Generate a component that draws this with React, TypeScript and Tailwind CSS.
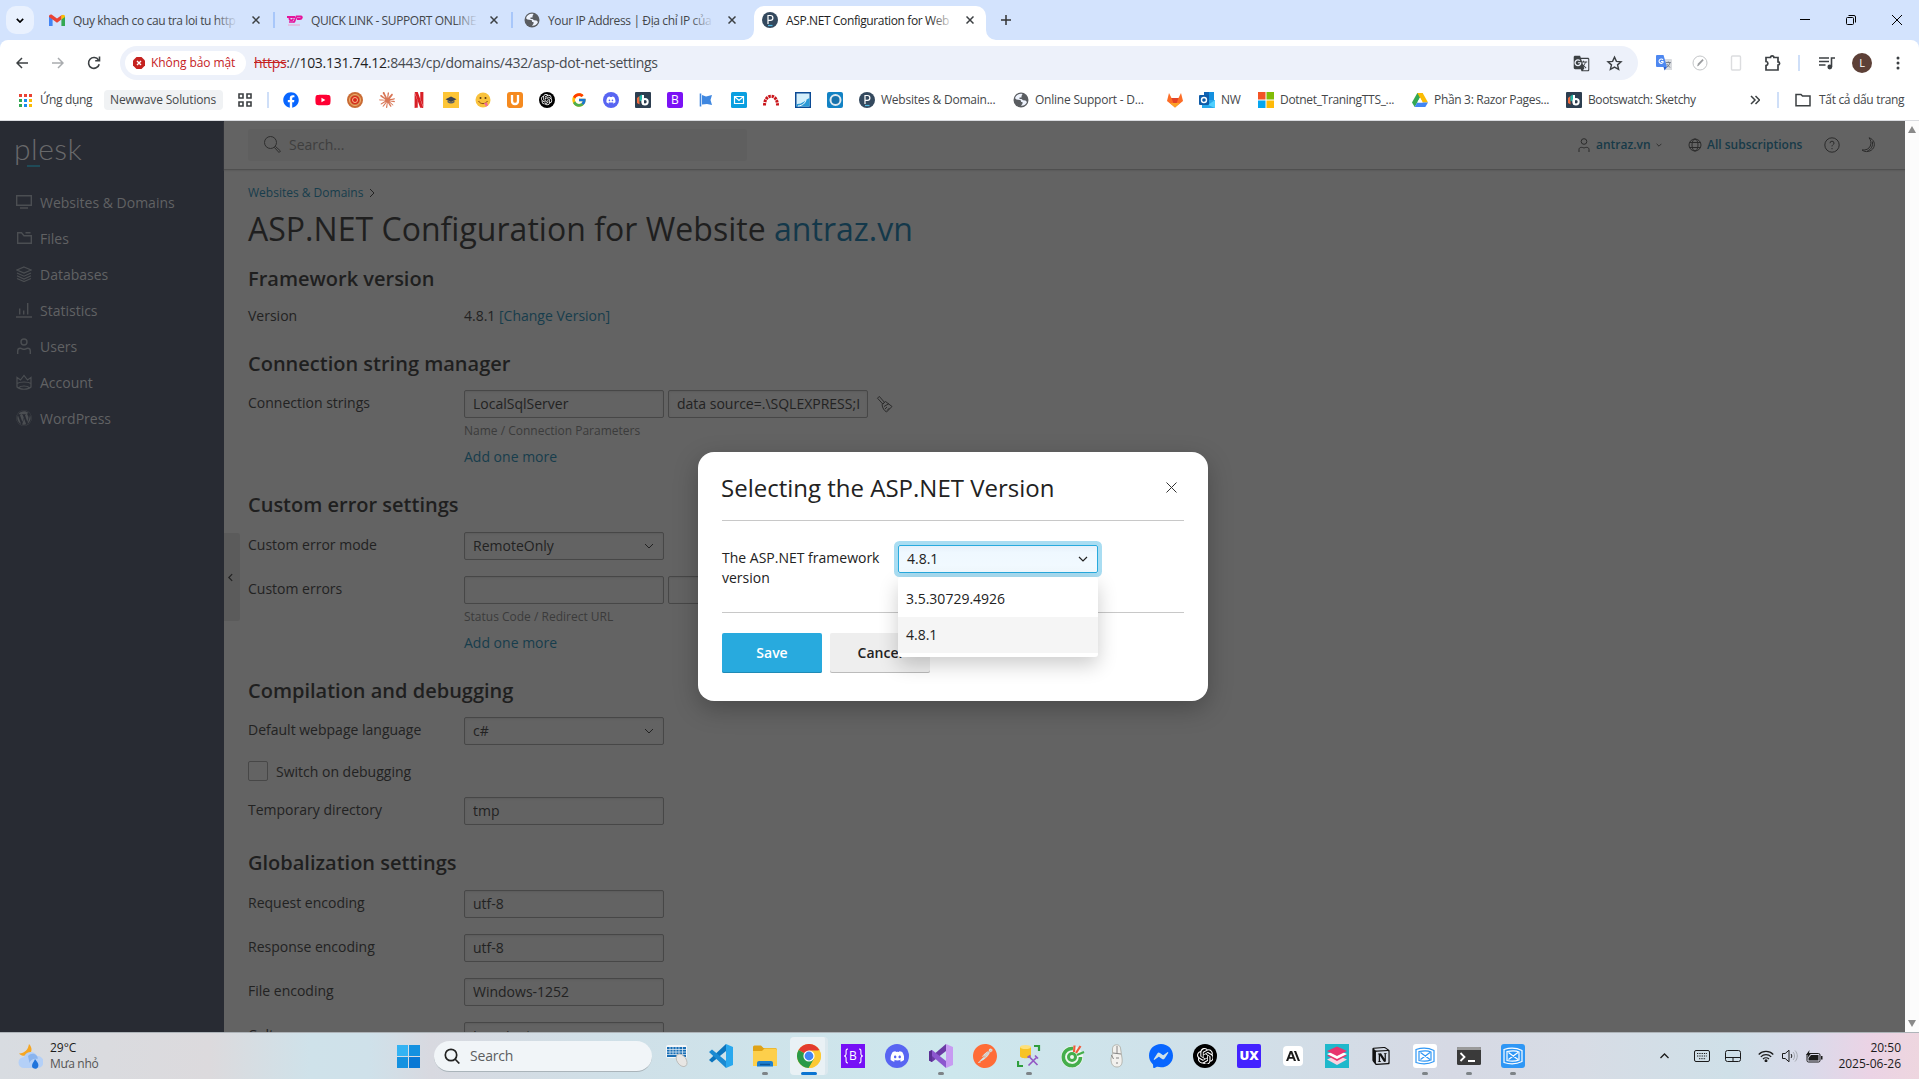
import React from "react";
import { FaFacebook, FaYoutube, FaDiscord, FaWordpress } from "react-icons/fa";
import { FcGoogle } from "react-icons/fc";
import { SiNetflix, SiOpenai, SiClaude, SiAnthropic, SiNotion, SiMessenger, SiPostman } from "react-icons/si";
import { MdGTranslate } from "react-icons/md";

type P = { className?: string };

const Chevron = ({ className = "" }: P) => (
  <svg viewBox="0 0 10 6" className={className} fill="none" stroke="currentColor"><path d="M1 1l4 4 4-4" /></svg>
);

const TabClose = ({ className = "" }: P) => (
  <svg viewBox="0 0 8 8" className={`size-2 shrink-0 ${className}`} fill="none" stroke="#3c4043" strokeWidth="1.5"><path d="M.5.5l7 7M7.5.5l-7 7" /></svg>
);

const Globe = () => (
  <svg viewBox="0 0 16 16" className="size-4 shrink-0">
    <circle cx="8" cy="8" r="7.5" fill="#5a5d61" />
    <path d="M9.500 2C6 1.200 3 3 2 6.200l1.500 1.300 3.500.5c1 .3 1.300 1 1 2h1.500v1.800l-1.500 2c3 .2 5-1.300 6-3.800l-1.500-1.500-2.500-.3-1.500-1.200H6.500V5.500h2V4z" fill="#eef3fd" />
  </svg>
);

const PleskIcon = () => (
  <svg viewBox="0 0 16 16" className="size-4 shrink-0">
    <circle cx="8" cy="8" r="8" fill="#34495e" />
    <path d="M6 12V3.500h2.500a2.300 2.300 0 010 4.800H6" fill="none" stroke="#fff" strokeWidth="1.200" />
    <path d="M6 13.500h4.500" stroke="#53bce6" strokeWidth="1.200" />
  </svg>
);

const Bootswatch = () => (
  <svg viewBox="0 0 16 16" className="size-4 shrink-0">
    <rect width="16" height="16" rx="1" fill="#2c3e50" />
    <path d="M2 6l2.500-2v8.500L2 11z" fill="#f26b3c" /><path d="M4.500 4L7 2.500v6l-2.500 1z" fill="#21b6a8" />
    <path d="M8 3v9.500" stroke="#fff" strokeWidth="2" /><circle cx="10" cy="9.700" r="2.700" fill="none" stroke="#fff" strokeWidth="2" />
  </svg>
);

const Gmail = () => (
  <svg viewBox="0 0 16 12" className="h-3 w-4 shrink-0">
    <path d="M0 1.500V12h3.600V5z" fill="#4285f4" /><path d="M16 1.500V12h-3.600V5z" fill="#34a853" />
    <path d="M0 2.500C0 .8 1.800 0 3.200 1L8 4.600 12.800 1 12.400 5.400 8 8.700 3.600 5.400 0 3z" fill="#ea4335" />
    <path d="M12.400 1.300C14 0 16 .8 16 2.500v.5l-3.600 2.600z" fill="#fbbc04" />
  </svg>
);

const Tab = ({ icon, children, w, fade = "from-[#d3e3fd]" }: { icon: React.ReactNode; children: string; w: string; fade?: string }) => (
  <>
    {icon}
    <div className={`relative ml-2 whitespace-nowrap pt-px text-[12px] leading-[18px] ${w}`}>
      {children}
      <div className={`absolute right-0 top-0 h-5 w-6 bg-gradient-to-l to-transparent ${fade}`} />
    </div>
  </>
);

function Tabs() {
  return (
    <div className="flex h-10 items-center bg-[#d3e3fd] text-[#44474a] tracking-[-0.38px]">
      <div className="ml-1.5 flex size-7 items-center justify-center rounded-[10px] bg-[#e9f1fe] text-black">
        <Chevron className="h-[5px] w-2 [stroke-width:2]" />
      </div>
      <div className="ml-[15px] flex w-[226px] shrink-0 items-center">
        <Tab icon={<Gmail />} w="w-[166px]">Quy khach co cau tra loi tu http</Tab>
        <TabClose className="ml-[14px]" />
        <div className="ml-[13px] h-4 w-[2px] bg-[#a8c7fa]" />
      </div>
      <div className="ml-[12px] flex w-[226px] shrink-0 items-center">
        <Tab w="w-[168px]" icon={
          <svg viewBox="0 0 16 12" className="h-3 w-4 shrink-0" fill="none" stroke="#e5149b" strokeWidth="1.500"><path d="M0 3h8M2.500 3v1.500C2.500 7 6 7 6 4.500M7 8.500l2.500-6h4.500c1.500 0 1 2.500-1 2.500h-3" strokeWidth="1.800" /><path d="M2 8h5" /><path d="M1 11h12" stroke="#efa0cc" strokeWidth="1" /></svg>
        }>QUICK LINK - SUPPORT ONLINE</Tab>
        <TabClose className="ml-[12px]" />
        <div className="ml-[13px] h-4 w-[2px] bg-[#a8c7fa]" />
      </div>
      <div className="ml-[11px] flex w-[216px] shrink-0 items-center">
        <Tab icon={<Globe />} w="w-[166px]">Your IP Address | Địa chỉ IP của</Tab>
        <TabClose className="ml-[14px]" />
      </div>
      <div className="flex h-[34px] items-end self-end">
        <svg viewBox="0 0 10 10" className="ml-[4px] size-2.5" fill="#fff"><path d="M10 0v10H0a10 10 0 0010-10z" /></svg>
        <div className="flex h-[34px] w-[232px] items-center rounded-t-[10px] bg-white pb-[6px] pl-2 text-[#1f1f1f]">
          <Tab icon={<PleskIcon />} w="w-[168px]" fade="from-white">ASP.NET Configuration for Web</Tab>
          <TabClose className="ml-[12px]" />
        </div>
        <svg viewBox="0 0 10 10" className="size-2.5" fill="#fff"><path d="M0 0v10h10A10 10 0 010 0z" /></svg>
      </div>
      <svg viewBox="0 0 10 10" className="ml-[5px] size-2.5" stroke="#333" strokeWidth="1.500"><path d="M5 0v10M0 5h10" /></svg>
      <div className="ml-auto flex items-center gap-9 pr-[17px] text-black">
        <svg viewBox="0 0 10 10" className="size-2.5" stroke="currentColor"><path d="M0 4.500h10" /></svg>
        <svg viewBox="0 0 10 10" className="size-2.5" fill="none" stroke="currentColor"><rect x=".5" y="2.500" width="7" height="7" rx="1" /><path d="M2.500.5H8A1.500 1.500 0 019.500 2v5.500" /></svg>
        <svg viewBox="0 0 10 10" className="size-2.5" stroke="currentColor"><path d="M0 0l10 10M10 0L0 10" /></svg>
      </div>
    </div>
  );
}

function Toolbar() {
  return (
    <div className="bg-[#d3e3fd]">
      <div className="flex h-[46px] items-center rounded-t-[8px] bg-white text-[#3c4043]">
        <svg viewBox="0 0 12 12" className="ml-4 size-3" fill="none" stroke="currentColor" strokeWidth="1.500"><path d="M12 6H1M6 1L1 6l5 5" /></svg>
        <svg viewBox="0 0 12 12" className="ml-6 size-3" fill="none" stroke="#a9acaf" strokeWidth="1.500"><path d="M0 6h11M6 1l5 5-5 5" /></svg>
        <svg viewBox="0 0 14 14" className="ml-[23px] size-3.5" fill="none" stroke="currentColor" strokeWidth="1.600"><path d="M12.200 8.200A5.400 5.400 0 1111.500 4" /><path d="M12.500.5v4.300H8.200" /></svg>
        <div className="ml-[19px] flex h-[34px] w-[1518px] items-center rounded-full bg-[#edf1fa]">
          <div className="ml-[5px] flex h-6 w-[121px] items-center rounded-full bg-white pl-2 text-[12px] font-medium tracking-[-0.08px] text-[#c5221f]">
            <svg viewBox="0 0 12 12" className="mr-1.5 size-3"><path d="M3.500 0h5L12 3.500v5L8.500 12h-5L0 8.500v-5z" fill="#c5221f" /><path d="M4 4l4 4M8 4l-4 4" stroke="#fff" strokeWidth="1.400" /></svg>
            <span className="whitespace-nowrap">Không bảo mật</span>
          </div>
          <div className="-mt-px ml-2 whitespace-nowrap text-[14px] tracking-[-0.29px] text-[#474b50]">
            <span className="text-[#c5221f] line-through">https</span>://<span className="text-[#1f1f1f]">103.131.74.12</span>:8443/cp/domains/432/asp-dot-net-settings
          </div>
          <MdGTranslate className="ml-auto size-[17px]" />
          <svg viewBox="0 0 24 24" className="ml-4 mr-[15px] size-[17px]" fill="none" stroke="currentColor" strokeWidth="2"><path d="M12 3l2.700 6 6.500.6-4.900 4.300 1.500 6.400L12 17l-5.800 3.300 1.500-6.400L2.800 9.600 9.300 9z" /></svg>
        </div>
        <svg viewBox="0 0 16 16" className="ml-[18px] size-4"><path d="M6 4h9a1 1 0 011 1v10H9z" fill="#d9dbdf" /><path d="M1 0h6.500L11 12H1a1 1 0 01-1-1V1a1 1 0 011-1z" fill="#4d87f0" /><path d="M7.500 12H11l-2.500 3.500z" fill="#2c5fcb" /><path d="M7 4.800A2.200 2.200 0 107 7.500V6.500H5" fill="none" stroke="#fff" strokeWidth="1.100" /><path d="M9.800 7.500h5M12.300 6.500v1M14 7.500c-.5 2-1.500 3.500-3 4.500M10.700 9l3.300 3.500" stroke="#6d7582" fill="none" strokeWidth=".9" /></svg>
        <svg viewBox="0 0 16 16" className="ml-5 size-4" fill="none"><circle cx="8" cy="8" r="7" stroke="#c4c6c8" /><path d="M5 11.500l1-3L10.500 4l1.200 1.200L7 10.200z" fill="#9a9c9f" /></svg>
        <svg viewBox="0 0 16 16" className="ml-5 size-4" fill="none" stroke="#dcdddf" strokeWidth="1.400"><rect x="3.500" y="1" width="9" height="14" rx="1" /></svg>
        <svg viewBox="0 0 18 18" className="ml-5 size-[18px]" fill="none" stroke="currentColor" strokeWidth="1.700"><path d="M2 3.500h4.500a1.700 1.700 0 013.400 0H14v4.300a1.600 1.600 0 010 3.200v5H2v-4.500c2.500-.3 2.500-3.700 0-4z" /></svg>
        <div className="ml-[16px] h-4 w-[2px] bg-[#cfdff8]" />
        <svg viewBox="0 0 16 16" className="ml-[19px] size-4" fill="none" stroke="currentColor" strokeWidth="1.600"><path d="M0 3h10M0 6.500h10M0 10h6.500M12.500 12V3H16" /><circle cx="10.800" cy="12" r="1.600" fill="currentColor" /></svg>
        <div className="ml-[17px] flex size-5 items-center justify-center rounded-full bg-[#5d4037] text-[11px] text-white">L</div>
        <svg viewBox="0 0 4 16" className="ml-6 h-4 w-1" fill="currentColor"><circle cx="2" cy="3" r="1.500" /><circle cx="2" cy="8" r="1.500" /><circle cx="2" cy="13" r="1.500" /></svg>
      </div>
    </div>
  );
}

const AppsGrid = () => (
  <svg viewBox="0 0 13 13" className="size-[13px] shrink-0">
    {["#ea4335", "#ea4335", "#ea4335", "#34a853", "#1a8cf0", "#fbbc04", "#34a853", "#1a8cf0", "#fbbc04"].map((c, i) => (
      <rect key={i} x={(i % 3) * 5} y={Math.floor(i / 3) * 5} width="3" height="3" fill={c} />
    ))}
  </svg>
);

const DiscordDot = ({ className = "" }: P) => (
  <div className={`flex shrink-0 items-center justify-center rounded-full bg-[#5865f2] text-white ${className}`}><FaDiscord className="size-[62%]" /></div>
);
const GptDot = ({ className = "" }: P) => (
  <div className={`flex shrink-0 items-center justify-center rounded-full bg-black text-white ${className}`}><SiOpenai className="size-[70%]" /></div>
);

function Bookmarks() {
  return (
    <div className="flex h-[35px] items-center border-b border-[#dadce0] bg-white pb-[7px] pt-[1px] text-[12px] tracking-[-0.32px] text-[#44474a] *:shrink-0 [&_span]:whitespace-nowrap">
      <div className="ml-[19px]"><AppsGrid /></div>
      <span className="ml-2 w-[64px]">Ứng dụng</span>
      <div className="flex h-5 w-[119px] items-center rounded bg-[#f0f2f4] pl-1.5 font-medium tracking-[-0.15px]"><span>Newwave Solutions</span></div>
      <svg viewBox="0 0 14 14" className="ml-[15px] size-3.5" fill="none" stroke="#3c4043" strokeWidth="1.600"><path d="M1 1h4v4H1zM9 1h4v4H9zM1 9h4v4H1zM9 9h4v4H9z" /></svg>
      <div className="ml-[15px] h-4 w-[2px] bg-[#cfdff8]" />
      <div className="ml-[14px] flex items-center gap-4 *:size-4 *:shrink-0">
        <FaFacebook color="#0866ff" />
        <FaYoutube color="#f03" />
        <svg viewBox="0 0 16 16"><circle cx="8" cy="8" r="8" fill="#c96b34" /><circle cx="8" cy="8" r="5.500" fill="none" stroke="#f0b070" strokeWidth="1" /><circle cx="8" cy="8" r="4" fill="#d9261c" /><circle cx="8" cy="8" r="2.500" fill="none" stroke="#f7c08a" /></svg>
        <SiClaude color="#d97757" />
        <SiNetflix color="#d81f26" />
        <svg viewBox="0 0 16 16"><rect width="16" height="16" fill="#fdc536" /><path d="M8 4.500l5.500 2.800L8 10 2.500 7.300z" fill="#3c4350" /><path d="M4.500 8.500v1.700c2 1.600 5 1.600 7 0V8.500L8 10.200z" fill="#5a5f66" /></svg>
        <svg viewBox="0 0 16 16"><circle cx="8" cy="8" r="7.500" fill="#f9c23c" /><circle cx="5.500" cy="6" r="1" fill="#5b3a16" /><circle cx="10.500" cy="6" r="1" fill="#5b3a16" /><path d="M3.500 9c2 3.500 7 3.500 9 0" stroke="#8a4b16" fill="none" /><path d="M9 11l3-.5 1 3-2 1z" fill="#f2699b" /></svg>
        <svg viewBox="0 0 16 16"><rect width="16" height="16" rx="3" fill="#f58a1f" /><path d="M5 3v6c0 4 6 4 6 0V3" fill="none" stroke="#fff" strokeWidth="2.300" /></svg>
        <GptDot />
        <FcGoogle />
        <DiscordDot />
        <Bootswatch />
        <div className="flex items-center justify-center rounded-[2px] bg-[#7b12f5] text-[12px] tracking-normal text-white">B</div>
        <svg viewBox="0 0 16 16" fill="#3f87e0"><path d="M1.500 1.500v13" stroke="#3f87e0" strokeWidth="1.600" /><path d="M3 3l4 1.500L13 3l-1.500 5L13 13l-5-1-5 .5z" /></svg>
        <svg viewBox="0 0 16 16"><rect width="16" height="16" rx="1.500" fill="#0a9fe0" /><path d="M3.500 4.500h9v7h-9zM4 5l4 3.500L12 5" fill="none" stroke="#fff" strokeWidth="1.200" /></svg>
        <svg viewBox="0 0 16 16" fill="none" stroke="#c9151b" strokeWidth="3" strokeDasharray="2.500 .8"><path d="M1.500 13.500C1.500 1 14.500 1 14.500 13.500" /></svg>
        <svg viewBox="0 0 16 16"><rect x=".75" y=".75" width="14.500" height="14.500" fill="#d4effb" stroke="#0c4a94" strokeWidth="1.500" /><path d="M1.500 12c4 0 5-1 7-2s3-3 6-4v8.500h-13z" fill="#2b9ad6" /><path d="M3 14c5-.5 7-3 8-6" stroke="#fff" fill="none" /></svg>
        <svg viewBox="0 0 16 16"><rect width="16" height="16" rx="2" fill="#1282c4" /><circle cx="8.500" cy="8" r="5" fill="#1872ab" stroke="#dfe9ef" strokeWidth="2" /></svg>
      </div>
      <div className="ml-4 flex w-[154px] items-center tracking-[-0.24px]"><PleskIcon /><span className="ml-1.5">Websites &amp; Domain...</span></div>
      <div className="flex w-[154px] items-center tracking-[-0.22px]"><Globe /><span className="ml-1.5">Online Support - D...</span></div>
      <svg viewBox="0 0 16 16" className="size-4"><path d="M8 15.500L0 9 2 1l2.500 5h7L14 1l2 8z" fill="#fc6d26" /><path d="M8 15.500L4.500 6h7z" fill="#e24329" /><path d="M8 15.500L3 11h10z" fill="#fca326" /></svg>
      <svg viewBox="0 0 16 16" className="ml-4 size-4"><path d="M5 0h10v8H5z" fill="#1490df" /><path d="M5 0h5v4H5z" fill="#0f64b5" /><path d="M3 8h13v8H3z" fill="#28a8ea" /><path d="M16 8l-7 5 7 3z" fill="#50d0ff" /><rect y="3" width="10" height="10" rx="1" fill="#0f5ca8" /><circle cx="5" cy="8" r="2.500" fill="none" stroke="#fff" strokeWidth="1.400" /></svg>
      <span className="ml-1.5 w-[37px]">NW</span>
      <svg viewBox="0 0 16 16" className="size-4"><path d="M0 0h7.500v7.500H0z" fill="#f35325" /><path d="M8.500 0H16v7.500H8.500z" fill="#81bc06" /><path d="M0 8.500h7.500V16H0z" fill="#05a6f0" /><path d="M8.500 8.500H16V16H8.500z" fill="#ffba08" /></svg>
      <span className="ml-1.5 w-[132px]">Dotnet_TraningTTS_...</span>
      <svg viewBox="0 0 16 14" className="h-3.5 w-4"><path d="M5.300 0h5.400L5 10l-2.300 4L0 9.500z" fill="#34a853" /><path d="M5.300 0h5.400L16 9.500h-5.400z" fill="#fbbc04" /><path d="M5.200 9.500H16L13.300 14H2.700z" fill="#4285f4" /><path d="M8 4.600L5.200 9.500h5.500z" fill="#fff" /></svg>
      <span className="ml-1.5 w-[132px]">Phần 3: Razor Pages...</span>
      <Bootswatch />
      <span className="ml-1.5 w-[160px] tracking-[-0.38px]">Bootswatch: Sketchy</span>
      <svg viewBox="0 0 10 10" className="ml-[2px] size-2.5" fill="none" stroke="#3c4043" strokeWidth="1.500"><path d="M1 1l4 4-4 4M5.500 1l4 4-4 4" /></svg>
      <div className="ml-[17px] h-4 w-[2px] bg-[#cfdff8]" />
      <svg viewBox="0 0 16 14" className="ml-4 h-3.5 w-4" fill="none" stroke="#3c4043" strokeWidth="1.500"><path d="M1 12.800V1.500h5L7.500 3H15v9.800z" /></svg>
      <span className="ml-2">Tất cả dấu trang</span>
    </div>
  );
}

const S = ({ children }: { children: React.ReactNode }) => (
  <svg viewBox="0 0 16 16" className="size-4 shrink-0" fill="none" stroke="#4b4e52" strokeWidth="1.400">{children}</svg>
);

const nav: [string, React.ReactNode][] = [
  ["Websites & Domains", <S><path d="M.7 1.700h14.600v9.600H.7zM4 14h8" /></S>],
  ["Files", <S><path d="M1.700 2v11.300h13.600V5.700H8L5.500 2.700H1M9.500 2.700h5" /></S>],
  ["Databases", <S><path d="M8 1l7 3-7 3-7-3zM1 7l7 3.200L15 7M1 9.800L8 13l7-3.200M1 12.500l7 3 7-3" strokeWidth="1.200" /></S>],
  ["Statistics", <S><path d="M0 15h16M3.700 12.500V6.500M7.700 12.500V8.500M11.700 12.500V1" /></S>],
  ["Users", <S><circle cx="8" cy="4" r="3" /><path d="M1.700 16v-3c0-2 1-2.700 2.500-2.700 2 0 2 1 3.800 1s1.800-1 3.800-1c1.500 0 2.500.7 2.500 2.700v3" /></S>],
  ["Account", <S><path d="M1 3.500V13c3 3 11 3 14 0V3.500L11.500 6 8 1.500 4.500 6zM1 9.500c3-2 11-2 14 0M3 13.500c2-2 8-2 10 0" strokeWidth="1.200" /></S>],
  ["WordPress", <FaWordpress className="size-4 shrink-0 text-[#4b4e52]" />],
];

function Sidebar() {
  return (
    <div className="flex w-56 shrink-0 flex-col bg-[#282b33]">
      <div className="relative ml-[14px] mt-[9px] h-9 font-['Lato'] text-[30px] font-light leading-9 tracking-[0.5px] text-[#68696b]">
        plesk
        <div className="absolute left-[13px] top-[35px] h-[2px] w-[13px] bg-[#1f4a57]" />
      </div>
      <div className="mt-[18px] flex flex-col">
        {nav.map(([label, icon]) => (
          <div key={label} className="flex h-9 items-center gap-2 pl-4 text-[14px] font-medium text-[#616264]">{icon}{label}</div>
        ))}
      </div>
    </div>
  );
}

const H2 = ({ children, className }: { children: string; className: string }) => (
  <h2 className={`h-7 text-[20px] font-semibold leading-7 text-[#1f1f1f] ${className}`}>{children}</h2>
);

const Row = ({ label, children, className }: { label: string; children: React.ReactNode; className: string }) => (
  <div className={`flex items-start ${className}`}>
    <div className="w-[216px] shrink-0 pt-[3px] leading-5">{label}</div>
    <div className="flex flex-col">{children}</div>
  </div>
);

const Field = ({ children = "", select = false }: { children?: string; select?: boolean }) => (
  <div className="flex h-7 w-[200px] items-center rounded-[2px] border border-[#474747] pl-2 shadow-[inset_0_1px_2px_#5c5c5c]">
    <span className="w-[183px] overflow-hidden whitespace-nowrap leading-6">{children}</span>
    {select && <Chevron className="ml-[-12px] h-[6px] w-2.5 shrink-0" />}
  </div>
);

const Broom = () => (
  <svg viewBox="0 0 18 18" className="ml-1 mt-[5px] size-[18px]" fill="none" stroke="#2b2b2b"><path d="M1.500 3.200L3.300 1.400l5.200 6-1.700 1.700zM6 9.500l3.500-3 6.500 5-5.500 5.500c-2.500-1.500-4-4-4.500-7.500zM8 11.500l5-3M9 14l2-2M11 15.500l2.500-2.500" /></svg>
);

const Hints = ({ hint }: { hint: string }) => (
  <>
    <div className="mt-[5px] h-4 text-[12px] leading-4 text-[#3b3b3b]">{hint}</div>
    <div className="mt-2 h-5 leading-5 text-[#173d4c]">Add one more</div>
  </>
);

function Main() {
  return (
    <div className="flex min-w-0 flex-1 flex-col bg-[#636363] text-[14px] text-[#222]">
      <div className="flex h-[49px] shrink-0 items-center border-b border-[#4f4f4f] px-6 pb-px shadow-[0_1px_1px_#5c5c5c]">
        <div className="flex h-8 w-[499px] items-center rounded-[3px] bg-[#5f5f5f] pl-4 text-[#3e3e3e]">
          <svg viewBox="0 0 17 17" className="mr-2 size-[17px]" fill="none" stroke="#2e2e2e"><circle cx="6.500" cy="6.500" r="6" /><path d="M10.500 11.500l1-1 5 4.500-1.500 1.500z" /></svg>
          Search...
        </div>
        <div className="ml-auto flex items-center text-[12px] font-semibold text-[#173a48]">
          <svg viewBox="0 0 12 14" className="mr-[6px] h-3.5 w-3" fill="none" stroke="#2b2b2b"><circle cx="6" cy="3.500" r="2.800" /><path d="M1 14v-2.500C1 9 4 9 6 10c2-1 5-1 5 1.500V14" /></svg>
          <span className="w-[54px]">antraz.vn</span>
          <Chevron className="ml-[6px] h-1 w-1.5 text-[#2b2b2b] [stroke-width:1.500]" />
          <svg viewBox="0 0 14 14" className="ml-[26px] mr-[5px] size-3.5" fill="none" stroke="#2b2b2b"><circle cx="7" cy="7" r="6" /><ellipse cx="7" cy="7" rx="3" ry="6" /><path d="M1.500 4.500h11M1.500 9.500h11" /></svg>
          <span className="w-[95px] whitespace-nowrap">All subscriptions</span>
          <svg viewBox="0 0 16 16" className="ml-[22px] size-4" fill="none" stroke="#2b2b2b"><circle cx="8" cy="8" r="7.200" /><path d="M6 6.200a2 2 0 114 0c0 1.300-2 1.500-2 3.200M8 11v1.200" /></svg>
          <svg viewBox="0 0 16 16" className="ml-5 mr-[5px] size-4" fill="none" stroke="#2b2b2b"><path d="M9 .8c5 1.500 6.500 6 4.500 10-2.200 4-8 5-11.500 2.200 4 .4 7-1 8.300-4C11.500 6 11 3 9 .8zM12.300 4.500c1 4-1 8-5 9.500" /></svg>
        </div>
      </div>
      <div className="flex min-h-0 flex-1">
        <div className="mt-[363px] flex h-[88px] w-4 shrink-0 items-center rounded-r-[3px] bg-[#5b5b5b] pl-[2px]">
          <Chevron className="h-[5px] w-[9px] rotate-90 [stroke-width:1.500]" />
        </div>
        <div className="flex flex-col overflow-hidden pl-2">
          <div className="mt-[14px] flex h-[18px] items-center gap-1 text-[12px] text-[#173d4c]">Websites &amp; Domains <Chevron className="h-[6px] w-2.5 -rotate-90 text-[#222]" /></div>
          <h1 className="mt-[5px] h-11 whitespace-nowrap text-[32px] leading-[44px] tracking-[0.025px] text-[#1f1f1f]">ASP.NET Configuration for Website <span className="text-[#14384a]">antraz.vn</span></h1>
          <H2 className="mt-[14px]">Framework version</H2>
          <Row label="Version" className="mt-[10px]"><div className="pt-[3px] leading-5">4.8.1 <span className="text-[#173d4c]">[Change Version]</span></div></Row>
          <H2 className="mt-6">Connection string manager</H2>
          <Row label="Connection strings" className="mt-3">
            <div className="flex gap-1"><Field>LocalSqlServer</Field><Field>data source=.\SQLEXPRESS;Integrated</Field><Broom /></div>
            <Hints hint="Name / Connection Parameters" />
          </Row>
          <H2 className="mt-6">Custom error settings</H2>
          <Row label="Custom error mode" className="mt-[13px]"><Field select>RemoteOnly</Field></Row>
          <Row label="Custom errors" className="mt-4">
            <div className="flex gap-1"><Field /><Field /></div>
            <Hints hint="Status Code / Redirect URL" />
          </Row>
          <H2 className="mt-6">Compilation and debugging</H2>
          <Row label="Default webpage language" className="mt-3"><Field select>c#</Field></Row>
          <div className="mt-4 flex h-5 items-center gap-2"><div className="size-5 rounded-[2px] border border-[#474747]" />Switch on debugging</div>
          <Row label="Temporary directory" className="mt-4"><Field>tmp</Field></Row>
          <H2 className="mt-6">Globalization settings</H2>
          <Row label="Request encoding" className="mt-[13px]"><Field>utf-8</Field></Row>
          <Row label="Response encoding" className="mt-4"><Field>utf-8</Field></Row>
          <Row label="File encoding" className="mt-4"><Field>Windows-1252</Field></Row>
          <Row label="Culture" className="mt-4"><Field>Invariant</Field></Row>
        </div>
      </div>
    </div>
  );
}

function Modal() {
  return (
    <div className="absolute left-[698px] top-[452px] flex h-[249px] w-[510px] flex-col rounded-2xl bg-white px-6 text-[14px] text-[#222] shadow-[0_8px_24px_rgba(0,0,0,0.25)]">
      <div className="flex h-[69px] shrink-0 items-center justify-between border-b border-[#c8c8c8] pr-[7px] pt-[3px]">
        <h3 className="-ml-px whitespace-nowrap text-[24px] leading-8">Selecting the ASP.NET Version</h3>
        <svg viewBox="0 0 11 11" className="size-[11px]" stroke="#333"><path d="M.5.5l10 10M10.500.5l-10 10" /></svg>
      </div>
      <div className="flex h-[92px] shrink-0 items-start border-b border-[#c8c8c8] pt-6">
        <div className="w-44 pr-2 pt-[3px] leading-5">The ASP.NET framework version</div>
        <div className="relative flex h-7 w-[200px] items-center justify-between rounded-[2px] border border-[#28aade] bg-gradient-to-b from-[#e6f1fa] via-[#eff8ff] via-25% to-[#f2faff] pl-2 pr-[9px] shadow-[0_0_0_4px_#a9ddf2]">
          <span className="-mt-px">4.8.1</span>
          <Chevron className="h-[6px] w-2.5 [stroke-width:1.200]" />
          <div className="absolute left-[-1px] top-[31px] z-10 h-20 w-[200px] rounded-[3px] bg-white py-1 shadow-[0_8px_20px_rgba(0,0,0,0.2)]">
            <div className="h-9 pl-2 leading-9">3.5.30729.4926</div>
            <div className="h-9 bg-[#f5f5f5] pl-2 leading-9">4.8.1</div>
          </div>
        </div>
      </div>
      <div className="mt-5 flex gap-2 text-center font-semibold leading-10">
        <div className="h-10 w-[100px] rounded-[2px] bg-[#28aade] text-white shadow-[inset_0_-1px_0_#1f8ab5]">Save</div>
        <div className="h-10 w-[100px] rounded-[2px] bg-[#eee] shadow-[inset_0_-1px_0_#bbb]">Cancel</div>
      </div>
    </div>
  );
}

const VsCode = () => (
  <svg viewBox="0 0 24 24"><path d="M17 0l7 3v18l-7 3z" fill="#29a8ee" /><path d="M17 0v7L3 18.500 0 16z" fill="#0b74bd" /><path d="M17 24v-7L3 5.500 0 8z" fill="#1a8ad2" /></svg>
);
const Explorer = () => (
  <svg viewBox="0 0 24 24"><path d="M0 3a1.500 1.500 0 011.500-1.500H8L10.500 4H22a2 2 0 012 2v5H0z" fill="#dfa216" /><path d="M0 7h9l2.500-2.500H22a2 2 0 012 2V22H0z" fill="#fdcf4b" /><path d="M4 19a2 2 0 012-2h12a2 2 0 012 2v3.500H4z" fill="#1c7fd0" /><path d="M7 20.500h10" stroke="#0c5597" strokeWidth="1.500" /></svg>
);
const ChromeIcon = () => (
  <svg viewBox="0 0 24 24"><circle cx="12" cy="12" r="12" fill="#fcc934" /><path d="M12 12L1.600 6A12 12 0 0122.400 6z" fill="#e33b2e" /><path d="M12 12L1.600 6a12 12 0 0010 18l5.600-9.500z" fill="#2a9a48" /><path d="M12 6.500h10.600A12 12 0 0112 24l5-9z" fill="#fcc934" /><circle cx="12" cy="12" r="5.600" fill="#fff" /><circle cx="12" cy="12" r="4.400" fill="#4285f4" /></svg>
);
const VisualStudio = () => (
  <svg viewBox="0 0 24 24"><path d="M17 0l7 3v18l-7 3z" fill="#c79bf2" /><path d="M17 0v7L3 18l-3-1.500v-2z" fill="#6a3aa5" /><path d="M17 24v-7L3 6 0 7.500v2z" fill="#8c57cf" /><path d="M0 7.500L3 6v12l-3-1.500z" fill="#5b2f94" /></svg>
);
const DbTools = () => (
  <svg viewBox="0 0 24 24" fill="none"><path d="M3 3v9c0 3 11 3 11 0V3" fill="#f7c325" /><ellipse cx="8.500" cy="3" rx="5.500" ry="2" fill="#fde07a" /><path d="M17 2h5v5M1 17v5h5" stroke="#2e9e3d" strokeWidth="2.200" /><path d="M12 12.500l8.500 8.500M20 13l-8.500 8.500M10.500 13.500l3-2M18 11.500l3 3" stroke="#9359c4" strokeWidth="1.700" /></svg>
);
const CocCoc = () => (
  <svg viewBox="0 0 24 24" fill="none"><circle cx="11" cy="13" r="11" fill="#eef7ef" /><path d="M12 4.500A8.600 8.600 0 1019.500 13" stroke="#45ae4b" strokeWidth="3.500" /><circle cx="11" cy="13" r="3.500" stroke="#45ae4b" strokeWidth="3" /><path d="M13 8l.5-6.500M15 9l4.500-7" stroke="#ef5a3c" strokeWidth="2.200" /><path d="M16 11l7-3" stroke="#45ae4b" strokeWidth="2" /></svg>
);
const KeyMouse = () => (
  <svg viewBox="0 0 24 24"><rect x="1" y="1" width="21" height="13" rx="2" fill="#f4f6f8" /><rect x="2" y="3" width="19" height="10" fill="#1a6fb5" /><path d="M2 5.500h19M2 8h19M2 10.500h19M5 3v7.500M8 3v7.500M11 3v7.500M14 3v7.500M17.500 3v7.500" stroke="#eef4f8" strokeWidth=".7" /><ellipse cx="16.500" cy="16" rx="4.500" ry="7" transform="rotate(-35 17 16)" fill="#e8e6e4" stroke="#b3b0ac" strokeWidth=".7" /></svg>
);
const Mouse = () => (
  <svg viewBox="0 0 24 24"><path d="M9 1.500c3-1.500 6-.5 6.500 2.500l1.500 10c.8 6-1 9-5 9s-6-3-6-8c0-3 2-4 1.500-8-.3-3 .5-5 1.500-5.500z" fill="#f2f1ee" stroke="#aaa89f" strokeWidth=".8" /><path d="M12 2v7M8 9l8 1M11 14h3M11 19h2M6.500 11l2 4" stroke="#777" strokeWidth=".9" fill="none" /></svg>
);
const Layers = () => (
  <svg viewBox="0 0 24 24"><rect width="24" height="24" fill="#1fb8cb" /><path d="M12 11l10 4.500L12 21 2 15.500z" fill="#fbd3e0" /><path d="M12 7l10 4.500L12 17 2 11.500z" fill="#e8356f" /><path d="M12 6l10 4-10 5-10-5z" fill="#fff" /><path d="M12 2.500L22 7l-10 5L2 7z" fill="#e8356f" /></svg>
);
const Ultra = ({ bg, fg }: { bg: string; fg: string }) => (
  <svg viewBox="0 0 24 24" fill="none"><rect width="24" height="24" rx="3" fill={bg} /><g stroke={fg} strokeWidth="1.200"><path d="M3 5.500c6-2 12-2 18 1v11c-6 3-12 3-18 1z" /><path d="M6 7.500c5-1 9-1 12 .5v8c-4 1.500-8 1.500-12 .5zM7.500 8.500l9.500 7M17 8.500l-9.500 7" /></g></svg>
);
const Terminal = () => (
  <svg viewBox="0 0 24 24"><rect y="3" width="24" height="18" rx="1.500" fill="#3a3a3a" /><path d="M0 6V4.500A1.500 1.500 0 011.500 3h21A1.500 1.500 0 0124 4.500V6z" fill="#9a9a9a" /><path d="M3.500 9l4 4-4 4M11 17h7" stroke="#fff" strokeWidth="1.800" fill="none" /></svg>
);
const Bracket = () => (
  <div className="flex items-center justify-center bg-[#7610f6] text-[12px] font-medium text-white">
    <svg viewBox="0 0 4 16" className="h-4 w-1" fill="none" stroke="currentColor" strokeWidth="1.100"><path d="M4 1C1 1 2.500 4 2 6.500 1.800 7.500 1 8 0 8c1 0 1.800.5 2 1.500C2.500 12 1 15 4 15" /></svg>
    <span className="w-[11px] text-center leading-4">B</span>
    <svg viewBox="0 0 4 16" className="h-4 w-1 -scale-x-100" fill="none" stroke="currentColor" strokeWidth="1.100"><path d="M4 1C1 1 2.500 4 2 6.500 1.800 7.500 1 8 0 8c1 0 1.800.5 2 1.500C2.500 12 1 15 4 15" /></svg>
  </div>
);

const apps: [React.ReactNode, number][] = [
  [<KeyMouse />, 0], [<VsCode />, 0], [<Explorer />, 1], [<ChromeIcon />, 2],
  [<Bracket />, 0],
  [<DiscordDot />, 0], [<VisualStudio />, 1],
  [<SiPostman color="#ff6c37" />, 0],
  [<DbTools />, 1], [<CocCoc />, 0], [<Mouse />, 0],
  [<SiMessenger color="#0866ff" />, 0],
  [<GptDot />, 0],
  [<div className="flex items-center justify-center rounded-[2px] bg-[#4322ff] text-[13px] font-extrabold text-white">UX</div>, 0],
  [<div className="p-[2px]"><div className="flex size-5 items-center justify-center rounded bg-white"><SiAnthropic className="size-3.5" /></div></div>, 0],
  [<Layers />, 0],
  [<SiNotion className="p-[3px]" color="#111" />, 0],
  [<Ultra bg="#fff" fg="#2f97f5" />, 1], [<Terminal />, 1], [<Ultra bg="#2f97f5" fg="#fff" />, 1],
];

function Taskbar() {
  return (
    <div className="flex h-[47px] shrink-0 items-center border-t border-[#aeb4b9] bg-[linear-gradient(90deg,#d8dce1_0px,#dcdadd_210px,#cfe2ea_310px,#cfe1ea_370px,#d8d9e0_430px,#cfe0e8_620px,#cde7ed_950px,#cfe2ea_1150px,#d6d9e4_1450px,#d7dce5_1580px,#cfe0e8_1730px,#dadaea_1810px,#ebd3e5_1870px,#eed6df_1919px)] text-[12px] text-[#1b1b1b]">
      <div className="flex w-[397px] items-center pl-[18px]">
        <svg viewBox="0 0 25 25" className="size-[25px]"><path d="M11 0c4 4 3 9-1 11-3 1.500-7 1-9-1.500C7 9 10 6 11 0z" fill="#f5a623" /><path d="M6 24a5.500 5.500 0 010-11 7 7 0 0113-1 6 6 0 011 12z" fill="#b4d0f7" /><path d="M10 12c4-5 11-1 9.500 3-4-1-7 1-8 4z" fill="#8ab4ee" /><path d="M17 15c3 4 4 5 3 8s-6 2-6-1 2-4 3-7z" fill="#1f74dc" /></svg>
        <div className="ml-[7px] leading-4"><div>29°C</div><div className="tracking-[-0.3px] text-[#555]">Mưa nhỏ</div></div>
      </div>
      <svg viewBox="0 0 23 23" className="size-[23px]"><g fill="#1491e0"><path d="M0 0h11v11H0z" fill="#33b3f3" /><path d="M12 0h11v11H12z" /><path d="M0 12h11v11H0z" /><path d="M12 12h11v11H12z" fill="#0a78d4" /></g></svg>
      <div className="ml-[14px] flex h-[31px] w-[218px] items-center rounded-full border-b border-[#aab4ba] bg-[#f1f5f8] pl-2.5 text-[14px] tracking-[-0.2px] text-[#5c5e60]">
        <svg viewBox="0 0 16 16" className="mr-2.5 size-4" fill="none" stroke="#222" strokeWidth="1.700"><circle cx="7" cy="7" r="5.700" /><path d="M11 11l4.300 4.500" /></svg>
        Search
      </div>
      <div className="ml-[3px] flex">
        {apps.map(([icon, state], i) => (
          <div key={i} className="relative flex h-[38px] w-11 items-center justify-center">
            {state === 2 && <div className="absolute left-[3px] top-0 h-[38px] w-[38px] rounded border-r-[3px] border-[#dbe8ee] bg-[#e9f1f5]" />}
            <div className="relative *:size-6">{icon}</div>
            {state === 1 && <div className="absolute bottom-0 left-[19px] h-[3px] w-1.5 rounded-full bg-[#7d8387]" />}
            {state === 2 && <div className="absolute bottom-0 left-[14px] h-[3px] w-4 rounded-full bg-[#0a74d1]" />}
          </div>
        ))}
      </div>
      <div className="ml-auto flex items-center text-[#1b1b1b]">
        <Chevron className="mr-6 h-[6px] w-[11px] rotate-180 [stroke-width:1.300]" />
        <svg viewBox="0 0 16 12" className="h-3 w-4" fill="none" stroke="currentColor"><rect x=".5" y=".5" width="15" height="11" rx="1.500" /><path d="M3 3.500h10M3 6h10M5 8.700h7" strokeDasharray="1.300 1" /></svg>
        <svg viewBox="0 0 16 12" className="ml-[15px] h-3 w-4" fill="none" stroke="currentColor"><rect x=".5" y=".5" width="15" height="11" rx="2" /><path d="M.5 7.500h15M8 7.500v4" /></svg>
        <svg viewBox="0 0 16 12" className="ml-[17px] h-3 w-4" fill="none" stroke="currentColor" strokeWidth="1.200"><path d="M.7 4.500a10.300 10.300 0 0114.600 0M2.800 6.800a7.300 7.300 0 0110.400 0M5 9a4.300 4.300 0 016 0" /><circle cx="8" cy="10.700" r=".9" fill="currentColor" /></svg>
        <svg viewBox="0 0 16 14" className="ml-2 h-3.5 w-4" fill="none" stroke="currentColor"><path d="M.5 4.500h2.700L7 1.200v11.600L3.200 9.500H.5zM9 5c1 1 1 3 0 4" /><path d="M11 3c2 2 2 6 0 8M13 1.500c3 3 3 8 0 11" stroke="#a4a9b0" /></svg>
        <svg viewBox="0 0 17 13" className="ml-2 h-[13px] w-[17px]"><rect x="1" y="3.500" width="13" height="8.500" rx="1.500" fill="none" stroke="currentColor" /><path d="M5 5h7.500v5.500h-10V8z" fill="currentColor" /><path d="M15 6h1.500v3.500H15zM3.500 0L0 5h2L1.500 8 5 3.500H3z" fill="currentColor" /></svg>
        <div className="ml-[15px] mr-[18px] w-[63px] whitespace-nowrap text-right leading-4"><div>20:50</div><div>2025-06-26</div></div>
      </div>
    </div>
  );
}

export default function App() {
  return (
    <div className="relative flex h-[1079px] w-[1919px] flex-col overflow-hidden font-['Open_Sans','Noto_Sans',sans-serif]">
      <Tabs />
      <Toolbar />
      <Bookmarks />
      <div className="flex h-[911px] shrink-0">
        <Sidebar />
        <Main />
        <div className="flex w-[14px] shrink-0 flex-col items-center justify-between bg-[#fcfcfc] py-[5px]">
          <svg viewBox="0 0 8 7" className="h-[7px] w-2"><path d="M4 0l4 7H0z" fill="#8a8a8a" /></svg>
          <svg viewBox="0 0 8 7" className="h-[7px] w-2"><path d="M4 7l4-7H0z" fill="#8a8a8a" /></svg>
        </div>
      </div>
      <Taskbar />
      <Modal />
    </div>
  );
}
